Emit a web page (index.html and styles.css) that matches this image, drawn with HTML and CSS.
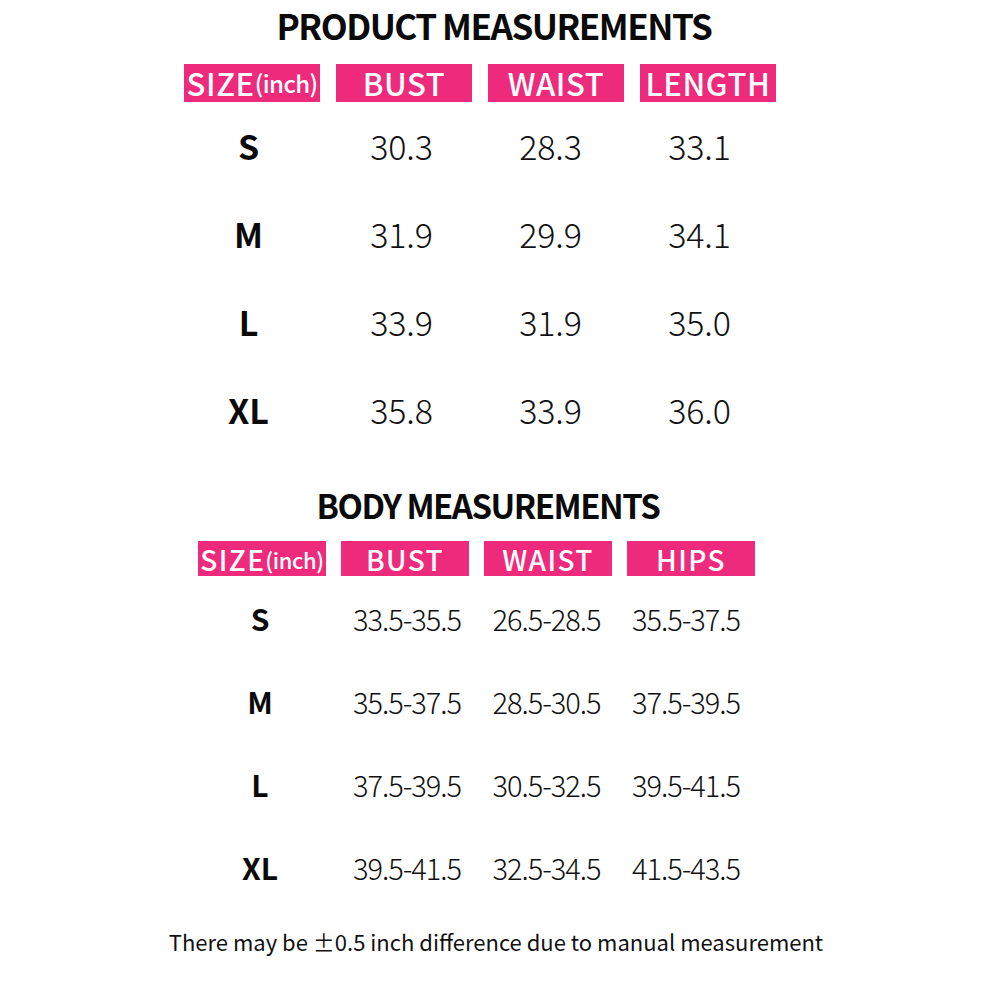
FILE: index.html
```html
<!DOCTYPE html>
<html>
<head>
<meta charset="utf-8">
<link rel="stylesheet" href="styles.css">
</head>
<body>
<section class="sec product">
  <h1 class="title">PRODUCT MEASUREMENTS</h1>
  <div class="grid heads">
    <div class="head">SIZE<span class="unit">(inch)</span></div>
    <div class="head">BUST</div>
    <div class="head">WAIST</div>
    <div class="head">LENGTH</div>
  </div>
  <div class="grid rows">
    <div class="size">S</div><div class="val">30.3</div><div class="val">28.3</div><div class="val">33.1</div>
    <div class="size">M</div><div class="val">31.9</div><div class="val">29.9</div><div class="val">34.1</div>
    <div class="size">L</div><div class="val">33.9</div><div class="val">31.9</div><div class="val">35.0</div>
    <div class="size">XL</div><div class="val">35.8</div><div class="val">33.9</div><div class="val">36.0</div>
  </div>
</section>
<section class="sec body">
  <h1 class="title">BODY MEASUREMENTS</h1>
  <div class="grid heads">
    <div class="head">SIZE<span class="unit">(inch)</span></div>
    <div class="head">BUST</div>
    <div class="head">WAIST</div>
    <div class="head">HIPS</div>
  </div>
  <div class="grid rows">
    <div class="size">S</div><div class="val">33.5-35.5</div><div class="val">26.5-28.5</div><div class="val">35.5-37.5</div>
    <div class="size">M</div><div class="val">35.5-37.5</div><div class="val">28.5-30.5</div><div class="val">37.5-39.5</div>
    <div class="size">L</div><div class="val">37.5-39.5</div><div class="val">30.5-32.5</div><div class="val">39.5-41.5</div>
    <div class="size">XL</div><div class="val">39.5-41.5</div><div class="val">32.5-34.5</div><div class="val">41.5-43.5</div>
  </div>
</section>
<p class="note">There may be ±0.5 inch difference due to manual measurement</p>
</body>
</html>
```

FILE: styles.css
```css
html, body {
  margin: 0;
  padding: 0;
  background: #ffffff;
}
body {
  width: 1000px;
  height: 1000px;
  font-family: "Noto Sans CJK SC", "Noto Sans", sans-serif;
  color: #111111;
  overflow: hidden;
}
.title {
  margin: 0;
  text-align: center;
  font-weight: 700;
  color: #0a0a0a;
  letter-spacing: -1.5px;
  white-space: nowrap;
}
.grid {
  display: grid;
}
.head {
  background: #ee2a7c;
  color: #ffffff;
  display: flex;
  align-items: center;
  justify-content: center;
  white-space: nowrap;
  font-weight: 500;
}
.unit {
  letter-spacing: -0.5px;
}
.size, .val {
  display: flex;
  align-items: center;
  justify-content: center;
  white-space: nowrap;
}
.size {
  font-weight: 700;
  color: #0a0a0a;
}
.val {
  font-weight: 300;
  color: #111111;
}

/* product section */
.product .title {
  height: 50px;
  line-height: 50px;
  font-size: 35px;
  transform: translateX(-6px);
}
.product .heads {
  margin-top: 14px;
  margin-left: 184px;
  grid-template-columns: repeat(4, 136px);
  column-gap: 16px;
}
.product .head {
  height: 38px;
  font-size: 31px;
  letter-spacing: 0.6px;
  line-height: 38px;
}
.product .head .unit {
  font-size: 24px;
  letter-spacing: -0.6px;
}
.product .rows {
  margin-top: -1px;
  margin-left: 170px;
  grid-template-columns: 157px 149px 149px 149px;
  grid-auto-rows: 88px;
}
.product .size {
  font-size: 34px;
}
.product .val {
  font-size: 34px;
  letter-spacing: -0.2px;
}

/* body section */
.body {
  margin-top: 28px;
}
.body .title {
  height: 48px;
  line-height: 48px;
  font-size: 33px;
  transform: translateX(-12px);
}
.body .heads {
  margin-top: 12px;
  margin-left: 198px;
  grid-template-columns: repeat(4, 128px);
  column-gap: 15px;
}
.body .head {
  height: 35px;
  font-size: 28px;
  letter-spacing: 1.4px;
}
.body .head .unit {
  font-size: 22px;
  letter-spacing: -0.4px;
}
.body .rows {
  margin-top: 0;
  margin-left: 183px;
  grid-template-columns: 154px 140px 139px 140px;
  grid-auto-rows: 83px;
}
.body .size {
  font-size: 30px;
}
.body .val {
  font-size: 29px;
  letter-spacing: -1px;
}

.note {
  margin: 19px 0 0 0;
  height: 28px;
  line-height: 28px;
  text-align: center;
  font-size: 22px;
  font-weight: 400;
  color: #111111;
  letter-spacing: 0;
  transform: translateX(-4px);
}
```
